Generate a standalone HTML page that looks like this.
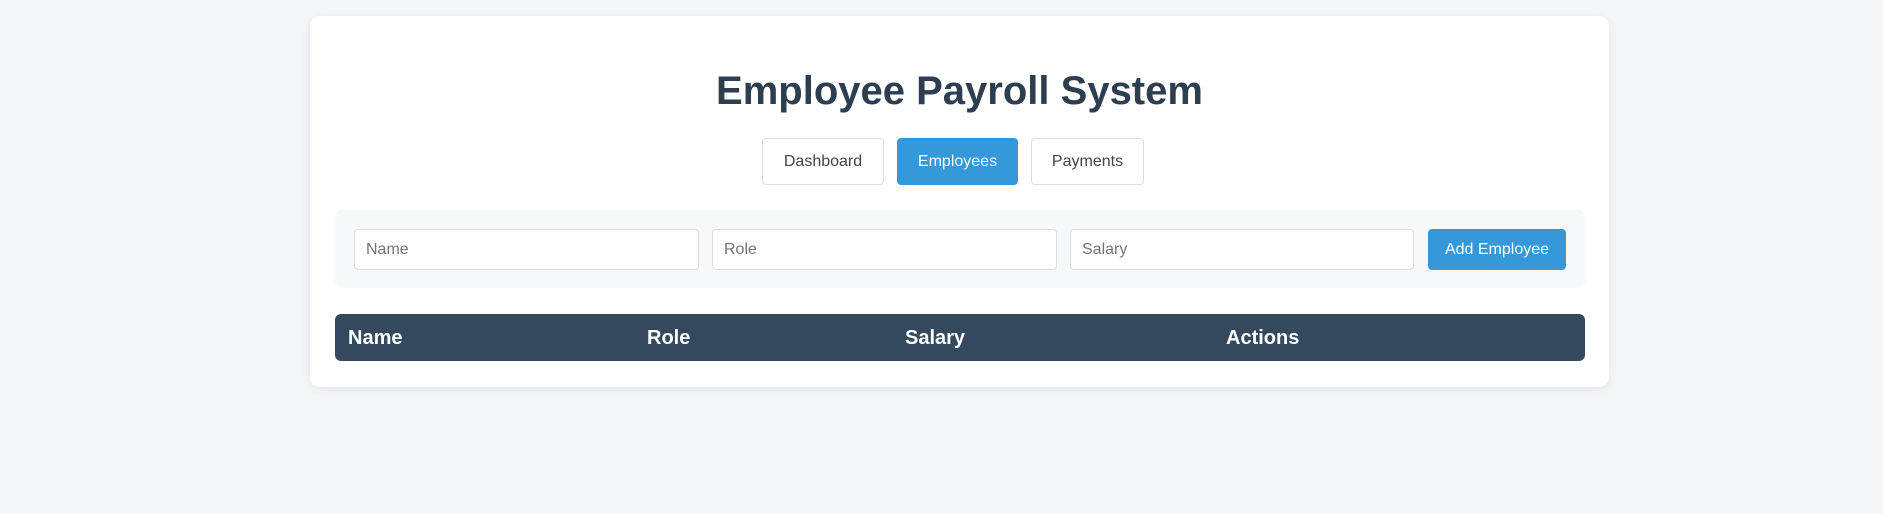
<!DOCTYPE html>
<html><head><style>
*{box-sizing:border-box;margin:0;padding:0}
body{width:1883px;height:514px;background:#f4f6f9;font-family:"Liberation Sans",sans-serif;position:relative;overflow:hidden}
.card{position:absolute;left:310px;top:16px;width:1299px;height:371px;background:#fff;border-radius:10px;box-shadow:0 2px 10px rgba(0,0,0,0.08)}
h1{position:absolute;left:0;right:0;top:69px;text-align:center;font-size:40px;font-weight:bold;color:#2c3e50}
.nav{position:absolute;top:138px;height:47px;border:1px solid #ddd;border-radius:4px;background:#fff;color:#444;font-size:16px;display:flex;align-items:center;justify-content:center}
.nav.active{background:#3498db;border-color:#3498db;color:#fff}
.panel{position:absolute;left:335px;top:210px;width:1250px;height:78px;background:#f7f8fa;border-radius:8px}
.inp{position:absolute;top:229px;height:41px;border:1px solid #ddd;border-radius:4px;background:#fff;color:#757575;font-size:16px;padding-left:11px;display:flex;align-items:center}
.btn{position:absolute;left:1428px;top:229px;width:138px;height:41px;background:#3498db;color:#fff;border-radius:4px;font-size:16px;display:flex;align-items:center;justify-content:center}
.th{position:absolute;left:335px;top:314px;width:1250px;height:47px;background:#34495e;border-radius:6px}
.th span{position:absolute;top:13px;color:#fff;font-weight:bold;font-size:20px}
</style></head><body>
<div class="card"></div>
<h1 style="left:0;width:1919px">Employee Payroll System</h1>
<div class="nav" style="left:762px;width:122px">Dashboard</div>
<div class="nav active" style="left:897px;width:121px">Employees</div>
<div class="nav" style="left:1031px;width:113px">Payments</div>
<div class="panel"></div>
<div class="inp" style="left:354px;width:345px">Name</div>
<div class="inp" style="left:712px;width:345px">Role</div>
<div class="inp" style="left:1070px;width:344px">Salary</div>
<div class="btn">Add Employee</div>
<div class="th"><span style="left:13px">Name</span><span style="left:312px">Role</span><span style="left:570px">Salary</span><span style="left:891px">Actions</span></div>
</body></html>
